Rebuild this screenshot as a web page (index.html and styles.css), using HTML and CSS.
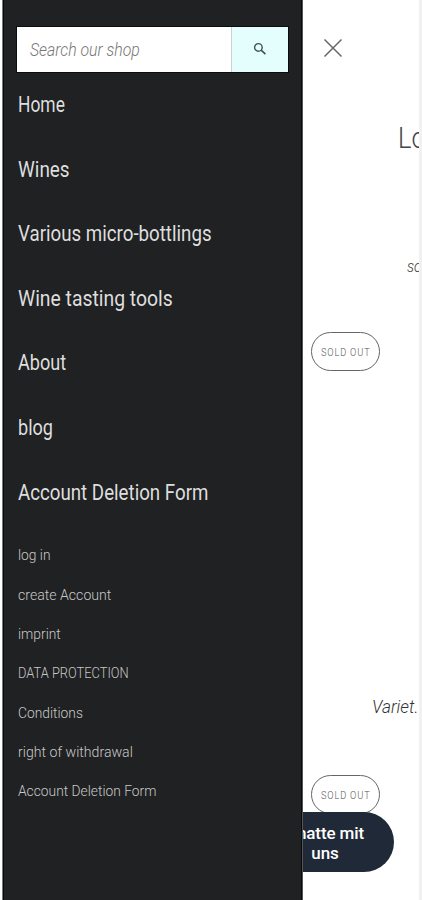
FILE: index.html
```html
<!DOCTYPE html>
<html lang="en">
<head>
<meta charset="utf-8">
<title>Shop menu</title>
<link rel="stylesheet" href="styles.css">
</head>
<body>
<div class="screen">
  <aside class="drawer">
    <form class="search">
      <div class="search-field"><span>Search our shop</span></div>
      <button class="search-button" type="button" aria-label="Search">
        <svg width="14" height="14" viewBox="0 0 14 14" fill="none" stroke="#465051"><circle cx="5.4" cy="5.4" r="3.8" stroke-width="1.4"/><path d="M8.2 8.2L12.4 12.2" stroke-width="1.6"/></svg>
      </button>
    </form>
    <nav class="primary">
      <a><span>Home</span></a>
      <a><span>Wines</span></a>
      <a><span>Various micro-bottlings</span></a>
      <a><span>Wine tasting tools</span></a>
      <a><span>About</span></a>
      <a><span>blog</span></a>
      <a><span>Account Deletion Form</span></a>
    </nav>
    <nav class="secondary">
      <a><span>log in</span></a>
      <a><span>create Account</span></a>
      <a><span>imprint</span></a>
      <a class="caps"><span>DATA PROTECTION</span></a>
      <a><span>Conditions</span></a>
      <a><span>right of withdrawal</span></a>
      <a><span>Account Deletion Form</span></a>
    </nav>
  </aside>
  <main class="page">
    <svg class="close" width="20" height="20" viewBox="0 0 20 20" fill="none" stroke="#666" stroke-width="1.5"><path d="M1.5 1.5L18.5 18.5M18.5 1.5L1.5 18.5"/></svg>
    <h1 class="title"><span>Lo</span></h1>
    <p class="note"><span>so</span></p>
    <div class="sold"><span>SOLD OUT</span></div>
    <p class="variety"><span>Variet.</span></p>
    <div class="sold"><span>SOLD OUT</span></div>
    <div class="chat">Chatte mit uns</div>
  </main>
  <div class="edge"></div>
</div>
</body>
</html>
```
FILE: styles.css
```css
* { box-sizing: border-box; }
body { margin: 0; background: #fff; font-family: Roboto, "Liberation Sans", sans-serif; }
.screen { display: grid; grid-template-columns: 301px 1fr 3px; width: 422px; height: 900px; padding-left: 2px; overflow: hidden; }
.drawer { background: #202122; border-left: 1px solid #77797a; border-right: 1px solid #555; box-shadow: inset 1px 0 #080909, inset -1px 0 #080909; padding: 27px 14px 0 14px; }
span { display: inline-block; transform-origin: 0 50%; white-space: nowrap; }
.search { display: flex; height: 45px; width: 271px; margin: 0; box-shadow: 0 0 0 1px #0b0c0c; }
.search-field { flex: 1; background: #fff; border-right: 1px solid #cbd5d5; padding-left: 13px; font-size: 18px; font-weight: 300; font-style: italic; line-height: 46px; color: #777; }
.search-field span { transform: scaleX(.88); }
.search-button { width: 56px; padding: 0 1px 2px 0; border: 0; background: #e4fdfd; display: flex; align-items: center; justify-content: center; }
.primary { display: flex; flex-direction: column; }
.primary a { height: 64.6px; line-height: 66px; font-size: 21.5px; color: #dedede; padding-left: .5px; }
.primary span { transform: scaleX(.87); }
.primary a:nth-child(1) span { transform: scaleX(.81); }
.primary a:nth-child(2) span { transform: scaleX(.88); }
.primary a:nth-child(4) span { transform: scaleX(.9); }
.primary a:nth-child(5) span, .primary a:nth-child(6) span { transform: scaleX(.84); }
.secondary { display: flex; flex-direction: column; margin-top: 11px; }
.secondary a { height: 39.35px; line-height: 40px; font-size: 15.5px; font-weight: 300; color: #c8c8c8; padding-left: .5px; }
.secondary span { transform: scaleX(.89); }
.secondary a:nth-child(2) span, .secondary a:nth-child(6) span { transform: scaleX(.91); }
.secondary .caps span { transform: scaleX(.83); }
.page { position: relative; overflow: hidden; display: flex; flex-direction: column; }
.close { margin: 38px 0 0 20px; flex: none; }
.title { margin: 59px 0 0 95px; height: 40px; line-height: 41px; font-size: 30px; font-weight: 300; color: #444; }
.title span { transform: scaleX(.85); }
.note { margin: 96px 0 0 104px; height: 26px; line-height: 26px; font-size: 17px; font-weight: 300; font-style: italic; color: #444; }
.note span { transform: scaleX(.85); }
.sold { margin: 53px 0 0 8px; flex: none; width: 69px; height: 39px; border: 1px solid #666; border-radius: 20px; line-height: 40px; padding-left: 9px; font-size: 11px; font-weight: 300; letter-spacing: 1px; color: #555; }
.sold span { transform: scaleX(.84); }
.variety { margin: 320px 0 0 69px; height: 30px; line-height: 31px; font-size: 19px; font-weight: 300; font-style: italic; color: #333; }
.variety span { transform: scaleX(.91); }
.variety + .sold { margin-top: 54px; }
.chat { position: absolute; left: -47px; top: 812px; width: 138px; height: 60px; border-radius: 30px; background: #1f2937; color: #fff; font-size: 17px; font-weight: 500; letter-spacing: -.1px; line-height: 20px; text-align: center; padding: 11px 28px 0; }
.edge { background: #f1f1f1; }
```
